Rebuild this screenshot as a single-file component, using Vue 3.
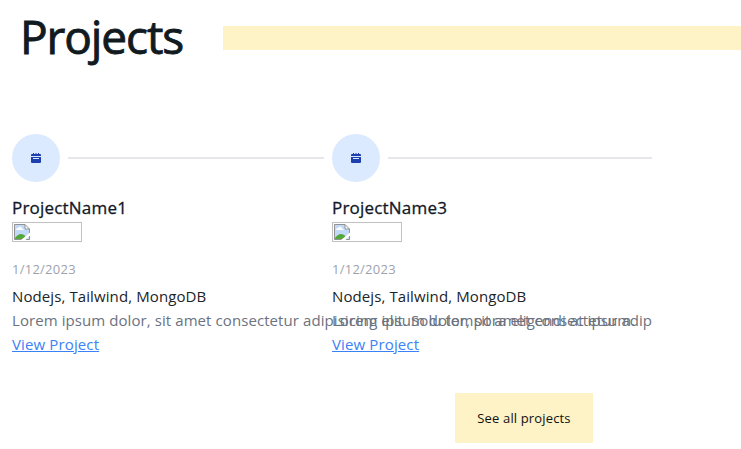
<script setup>
const projects = [
  { name: 'ProjectName1', text: 'Lorem ipsum dolor, sit amet consectetur adipisicing elit. Solu tempora eligendi at ipsum.' },
  { name: 'ProjectName3', text: 'Lorem ipsum dolor, sit amet consectetur adip' }
]
</script>

<template>
  <main class="page">
    <header class="heading">
      <h1>Projects</h1>
      <div class="bar"></div>
    </header>
    <ol class="timeline">
      <li v-for="p in projects" :key="p.name" class="item">
        <div class="marker">
          <span class="dot">
            <svg class="calendar" viewBox="0 0 10 10">
              <path fill="#1e40af" d="M0 3V2q0-1 1-1h1V0h1v1h1.500V0h1v1H7V0h1v1h1q1 0 1 1v1zM0 4h10v5q0 1-1 1H1q-1 0-1-1z" />
              <path stroke="#dbeafe" d="M2 5.500h6" />
            </svg>
          </span>
          <span class="line"></span>
        </div>
        <h3>{{ p.name }}</h3>
        <div class="thumb">
          <svg width="16" height="16" viewBox="0 0 16 16">
            <path fill="#c3d9f8" d="M0 0h11l5 5v11H0z" />
            <path fill="#fff" d="M2 6q0-2 2-2 1-2 3-1 1 0 1 2 2 0 2 1zM11 0v5h5V0z" />
            <path fill="#53a83b" d="M1 15v-1q6-8 12 0v1z" />
            <path fill="none" stroke="#939393" d="M.5 15.500V.5H11l4.500 4.500V15.500zM11 .5V5h4.500" />
            <path fill="#fff" d="M16 8.500v3L11.500 16H7z" />
          </svg>
        </div>
        <time>1/12/2023</time>
        <p class="stack">Nodejs, Tailwind, MongoDB</p>
        <p class="text">{{ p.text }}</p>
        <a class="link">View Project</a>
      </li>
    </ol>
    <div class="actions"><button>See all projects</button></div>
  </main>
</template>

<style>
body { background: #fff; overflow: hidden; }
</style>
<style scoped>
* { box-sizing: border-box; }
.page { width: 741px; height: 449px; overflow: hidden; color: #1b2426; font-family: "Segoe UI", "Open Sans", "Noto Sans", sans-serif; font-size: 15px; line-height: 24px; letter-spacing: .04px; }
.heading { display: flex; align-items: center; height: 76px; padding-left: 20px; }
h1 { width: 203px; margin: 0; padding-bottom: 4px; font-size: 46px; line-height: 68px; font-weight: 500; letter-spacing: -1.1px; color: #111b1f; -webkit-text-stroke: .9px currentColor; }
.bar { flex: 1; height: 24px; background: #fef2c7; }
.timeline { display: flex; width: 640px; margin: 58px 0 0 12px; padding: 0; list-style: none; }
.item { flex: 0 0 320px; width: 320px; }
.marker { display: flex; align-items: center; }
.dot { display: flex; align-items: center; justify-content: center; width: 48px; height: 48px; border-radius: 50%; background: #dbeafe; }
.calendar { width: 10px; height: 10px; }
.line { flex: 1; height: 2px; margin-left: 8px; background: #e5e7eb; }
.item:first-child .line { margin-right: 8px; }
h3 { margin: 12px 0 0; font-size: 17px; line-height: 28px; font-weight: 500; letter-spacing: .2px; color: #111827; -webkit-text-stroke: .3px currentColor; }
.thumb { width: 70px; height: 20px; padding: 1px; border: 1px solid #c0c0c0; }
.thumb svg { display: block; }
time { display: block; margin-top: 20px; font-size: 13px; line-height: 14px; letter-spacing: .25px; color: #9ca3af; }
p { margin: 0; white-space: nowrap; }
.stack { margin-top: 8px; letter-spacing: .1px; }
.text { color: #6b7280; }
.item:first-child .text { letter-spacing: .08px; }
.link { display: block; width: max-content; letter-spacing: .13px; color: #3b82f6; text-decoration: underline; }
.actions { display: flex; margin: 37px 0 0 455px; }
button { width: 138px; height: 50px; padding: 0; border: 0; background: #fef2c7; color: #111; font-family: inherit; font-size: 13px; letter-spacing: .15px; }
</style>
